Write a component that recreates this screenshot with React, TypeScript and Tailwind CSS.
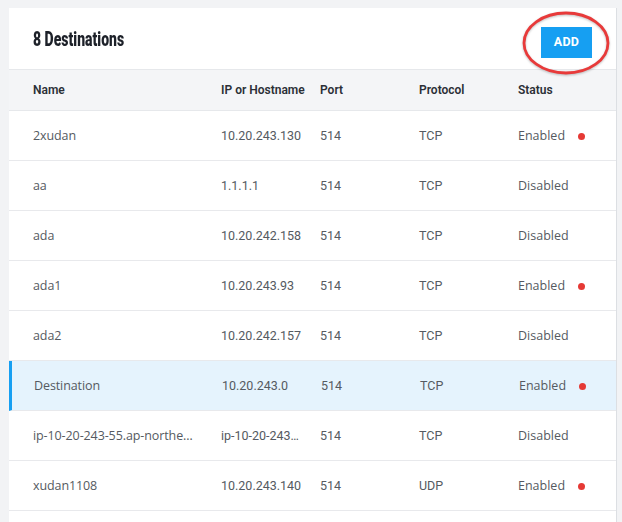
import React from 'react';

interface Destination {
  name: string;
  host: string;
  port: number;
  protocol: 'TCP' | 'UDP';
  enabled: boolean;
  selected?: boolean;
}

const destinations: Destination[] = [
  { name: '2xudan', host: '10.20.243.130', port: 514, protocol: 'TCP', enabled: true },
  { name: 'aa', host: '1.1.1.1', port: 514, protocol: 'TCP', enabled: false },
  { name: 'ada', host: '10.20.242.158', port: 514, protocol: 'TCP', enabled: false },
  { name: 'ada1', host: '10.20.243.93', port: 514, protocol: 'TCP', enabled: true },
  { name: 'ada2', host: '10.20.242.157', port: 514, protocol: 'TCP', enabled: false },
  { name: 'Destination', host: '10.20.243.0', port: 514, protocol: 'TCP', enabled: true, selected: true },
  { name: 'ip-10-20-243-55.ap-northe…', host: 'ip-10-20-243…', port: 514, protocol: 'TCP', enabled: false },
  { name: 'xudan1108', host: '10.20.243.140', port: 514, protocol: 'UDP', enabled: true },
];

const cols = 'grid grid-cols-[188px_99px_99px_99px_minmax(0,1fr)] items-center';

const App: React.FC = () => {
  return (
    <div className="min-h-screen bg-[#f2f3f5] pl-[9px] pt-[8px] font-['Roboto',sans-serif]">
      <div className="relative w-[608px] bg-white border-r border-[#dcdfe3] pb-[11px]">
        {/* Title bar */}
        <div className="flex h-[62px] items-center justify-between border-b border-[#e6e8eb] pl-6 pr-6">
          <h1 className="origin-left [transform:scaleX(0.7)] whitespace-nowrap text-[20px] font-black text-[#1d2129]">
            {destinations.length} Destinations
          </h1>
          <button className="mt-2 h-[31px] w-[51px] bg-[#169ff2] text-[12.5px] font-bold tracking-[0.3px] text-white">
            ADD
          </button>
        </div>

        {/* Highlight ring around the add button */}
        <svg
          className="pointer-events-none absolute left-[511px] top-[1px] drop-shadow-[0_1px_1px_rgba(0,0,0,0.25)]"
          width="92"
          height="68"
          viewBox="0 0 92 68"
        >
          <ellipse cx="46" cy="34" rx="42" ry="30" fill="none" stroke="#e83a3a" strokeWidth="2.8" />
        </svg>

        {/* Column headers */}
        <div className={`${cols} h-[41px] border-b border-[#e6e8eb] bg-[#f4f5f7] pl-6 text-[12px] font-semibold text-[#2b2f36]`}>
          <span>Name</span>
          <span>IP or Hostname</span>
          <span>Port</span>
          <span>Protocol</span>
          <span>Status</span>
        </div>

        {/* Rows */}
        {destinations.map((d) => (
          <div
            key={d.name}
            className={`${cols} h-[50px] border-b border-[#e8e9ec] pt-px text-[12.5px] text-[#555a61] ${
              d.selected ? 'border-l-[3px] border-l-[#169ff2] bg-[#e5f3fd] pl-[22px]' : 'pl-6'
            }`}
          >
            <span className="min-w-0 truncate pr-3 font-['Open_Sans',sans-serif] tracking-[-0.1px]">{d.name}</span>
            <span className="min-w-0 truncate pr-2">{d.host}</span>
            <span>{d.port}</span>
            <span>{d.protocol}</span>
            <span className="flex items-center font-['Open_Sans',sans-serif]">
              {d.enabled ? 'Enabled' : 'Disabled'}
              {d.enabled && <span className="ml-[13px] h-[7px] w-[7px] rounded-full bg-[#e53935]" />}
            </span>
          </div>
        ))}
      </div>
    </div>
  );
};

export default App;
